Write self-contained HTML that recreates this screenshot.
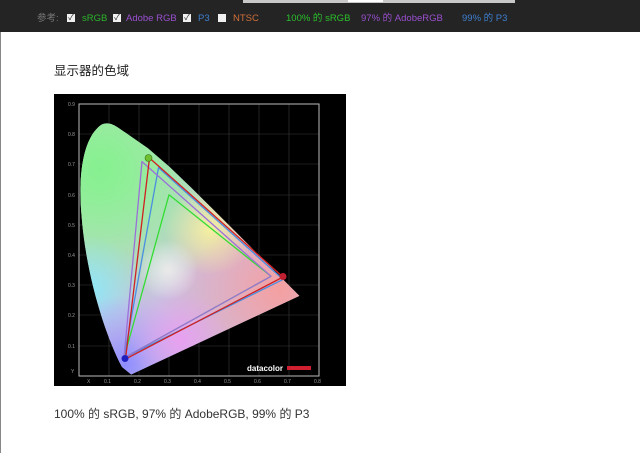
<!DOCTYPE html>
<html><head><meta charset="utf-8"><style>
html,body{margin:0;padding:0;width:640px;height:453px;overflow:hidden;background:#fff;font-family:"Liberation Sans","Noto Sans CJK SC",sans-serif;}
.top{position:absolute;left:0;top:0;width:640px;height:32px;background:#242424;}
.bar{position:absolute;left:243px;top:0;width:272px;height:3px;background:#c8c8c8;}
.bar2{position:absolute;left:348px;top:0;width:35px;height:2px;background:#fff;}
.t{position:absolute;top:13px;font-size:9.5px;line-height:12px;white-space:nowrap;}
.cb{position:absolute;top:14px;width:8px;height:8px;background:#f0f0f0;font-size:8px;line-height:8px;color:#222;text-align:center;}
.lb{position:absolute;left:0;top:32px;width:1px;height:421px;background:#888;}
.h{position:absolute;left:54px;top:60px;font-size:12.5px;color:#222;}
.p{position:absolute;left:54px;top:405px;font-size:12px;color:#333;}
svg{position:absolute;left:54px;top:94px;}
</style></head><body>
<div class="top"><div class="bar"></div><div class="bar2"></div>
<span class="t" style="left:37px;color:#777">参考:</span>
<span class="cb" style="left:67px">✓</span><span class="t" style="left:82px;color:#2bb42b">sRGB</span>
<span class="cb" style="left:113px">✓</span><span class="t" style="left:126px;color:#9a4fd0">Adobe RGB</span>
<span class="cb" style="left:183px">✓</span><span class="t" style="left:198px;color:#3d7fd0">P3</span>
<span class="cb" style="left:218px"></span><span class="t" style="left:233px;color:#d0703a">NTSC</span>
<span class="t" style="left:286px;color:#2bc02b">100% 的 sRGB</span>
<span class="t" style="left:361px;color:#9a4fd0">97% 的 AdobeRGB</span>
<span class="t" style="left:462px;color:#3d7fd0">99% 的 P3</span>
</div>
<div class="lb"></div>
<div class="h">显示器的色域</div>
<svg width="292" height="292" viewBox="54 94 292 292">
<defs>
<clipPath id="c"><path d="M131.2,374.5 L122,367 C105,335 86,275 81.5,215 C78,175 83,138 101,125 C110,120 118,128 125.4,132.6 L147.9,148.2 L169.5,166.9 L190.9,187.4 L212.2,208.5 L232.8,229 L251.6,247.9 L267.1,263.5 L299.4,295.9 Z"/></clipPath>
<radialGradient id="g1" cx="100" cy="170" r="140" gradientUnits="userSpaceOnUse"><stop offset="0" stop-color="#86f090"/><stop offset="1" stop-color="#a8f0a8" stop-opacity="0"/></radialGradient>
<radialGradient id="g2" cx="88" cy="290" r="55" gradientUnits="userSpaceOnUse"><stop offset="0" stop-color="#8ee8f8"/><stop offset="1" stop-color="#8ee8f8" stop-opacity="0"/></radialGradient>
<radialGradient id="g3" cx="125" cy="365" r="70" gradientUnits="userSpaceOnUse"><stop offset="0" stop-color="#8f8cff"/><stop offset="1" stop-color="#a8a0ff" stop-opacity="0"/></radialGradient>
<radialGradient id="g4" cx="280" cy="290" r="120" gradientUnits="userSpaceOnUse"><stop offset="0" stop-color="#f4a0a0"/><stop offset="1" stop-color="#f4a0b0" stop-opacity="0"/></radialGradient>
<radialGradient id="g5" cx="180" cy="340" r="50" gradientUnits="userSpaceOnUse"><stop offset="0" stop-color="#e8a0f0"/><stop offset="1" stop-color="#e8a0f0" stop-opacity="0"/></radialGradient>
<radialGradient id="g6" cx="210" cy="230" r="45" gradientUnits="userSpaceOnUse"><stop offset="0" stop-color="#f4f0a0"/><stop offset="1" stop-color="#f4f0a0" stop-opacity="0"/></radialGradient>
<radialGradient id="g7" cx="168" cy="270" r="30" gradientUnits="userSpaceOnUse"><stop offset="0" stop-color="#f4f0f0" stop-opacity="0.8"/><stop offset="1" stop-color="#fff" stop-opacity="0"/></radialGradient>
</defs>
<rect x="54" y="94" width="292" height="292" fill="#000"/>
<g stroke="#3a3a3a" stroke-width="0.6">
<path d="M109,104V376M139,104V376M169,104V376M199,104V376M229,104V376M259,104V376M289,104V376"/>
<path d="M79,134H319M79,164H319M79,195H319M79,225H319M79,255H319M79,285H319M79,315H319M79,346H319"/>
</g>
<rect x="79" y="104" width="240" height="272" fill="none" stroke="#bbb" stroke-width="1"/>
<g fill="#999" font-size="5" font-family="Liberation Sans">
<text x="68" y="106">0.9</text><text x="68" y="136">0.8</text><text x="68" y="166">0.7</text><text x="68" y="197">0.6</text><text x="68" y="227">0.5</text><text x="68" y="257">0.4</text><text x="68" y="287">0.3</text><text x="68" y="317">0.2</text><text x="68" y="348">0.1</text><text x="71" y="373">Y</text>
<text x="87" y="383">X</text><text x="104" y="383">0.1</text><text x="134" y="383">0.2</text><text x="164" y="383">0.3</text><text x="194" y="383">0.4</text><text x="224" y="383">0.5</text><text x="254" y="383">0.6</text><text x="284" y="383">0.7</text><text x="314" y="383">0.8</text>
</g>
<g clip-path="url(#c)">
<rect x="54" y="94" width="292" height="292" fill="#c8c0e0"/>
<rect x="54" y="94" width="292" height="292" fill="url(#g4)"/>
<rect x="54" y="94" width="292" height="292" fill="url(#g1)"/>
<rect x="54" y="94" width="292" height="292" fill="url(#g1)"/>
<rect x="54" y="94" width="292" height="292" fill="url(#g2)"/>
<rect x="54" y="94" width="292" height="292" fill="url(#g3)"/>
<rect x="54" y="94" width="292" height="292" fill="url(#g5)"/>
<rect x="54" y="94" width="292" height="292" fill="url(#g6)"/>
<rect x="54" y="94" width="292" height="292" fill="url(#g7)"/>
</g>
<g fill="none" stroke-width="1.3" stroke-linejoin="round">
<path d="M271,276.3L169,194.8L124,357.9Z" stroke="#33dd33"/>
<path d="M283,279.4L158.5,167.6L124,357.9Z" stroke="#4a8ee0"/>
<path d="M271,276.3L142,161.6L124,357.9Z" stroke="#9a70d8"/>
<path d="M283,277L149.5,158L125.5,359Z" stroke="#d02020"/>
</g>
<circle cx="148.5" cy="158" r="3.5" fill="#6fc030" stroke="#3a7010" stroke-width="0.6"/>
<circle cx="283" cy="276.5" r="3.5" fill="#c02030"/>
<circle cx="125" cy="358.5" r="3.5" fill="#2020c0"/>
<text x="247" y="371" fill="#fff" font-size="8" font-weight="bold" font-family="Liberation Sans">datacolor</text>
<rect x="287" y="366" width="24" height="4" fill="#d02030"/>
</svg>
<div class="p">100% 的 sRGB, 97% 的 AdobeRGB, 99% 的 P3</div>
</body></html>
